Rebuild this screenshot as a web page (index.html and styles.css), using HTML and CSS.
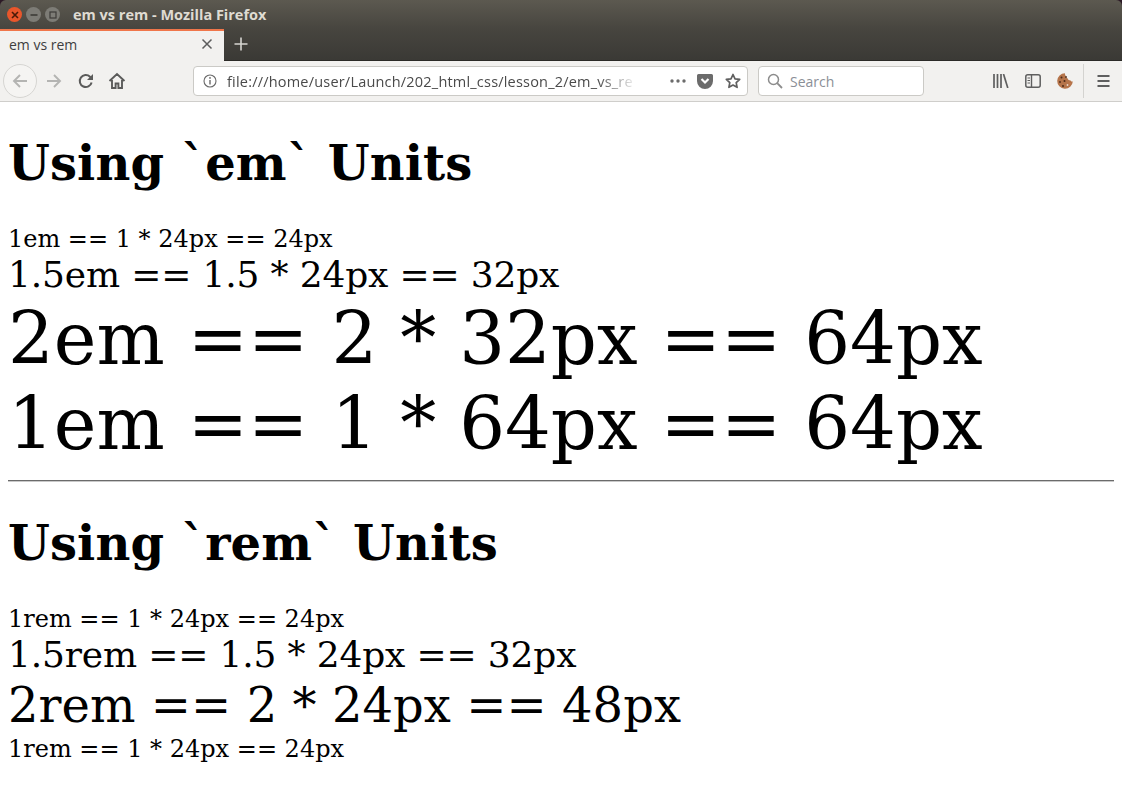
FILE: index.html
```html
<!DOCTYPE html>
<html lang="en">
  <head>
    <meta charset="UTF-8" />
    <meta name="viewport" content="width=device-width, initial-scale=1.0" />
    <title>em vs rem</title>
    <link rel="stylesheet" href="styles.css">
  </head>

  <body>
    <div class="browser">
      <!-- title bar -->
      <div class="titlebar">
        <div class="window-buttons">
          <span class="win-btn win-btn--close">
            <svg width="8" height="8" viewBox="0 0 8 8"><path d="M1 1l6 6M7 1L1 7" stroke="#4a1a08" stroke-width="1.6"/></svg>
          </span>
          <span class="win-btn">
            <svg width="8" height="8" viewBox="0 0 8 8"><path d="M0.500 4h7" stroke="#3c3b37" stroke-width="1.6"/></svg>
          </span>
          <span class="win-btn">
            <svg width="8" height="8" viewBox="0 0 8 8"><rect x="1" y="1" width="6" height="6" fill="none" stroke="#3c3b37" stroke-width="1.2"/></svg>
          </span>
        </div>
        <span class="titlebar__text">em vs rem - Mozilla Firefox</span>
      </div>

      <!-- tabs -->
      <div class="tabstrip">
        <div class="tab">
          <span class="tab__label">em vs rem</span>
          <svg class="tab__close" width="12" height="12" viewBox="0 0 12 12"><path d="M1.500 1.500l9 9M10.500 1.500l-9 9" stroke="#5c5c5c" stroke-width="1.500"/></svg>
        </div>
        <svg class="tab-new" width="14" height="14" viewBox="0 0 14 14"><path d="M7 0.500v13M0.500 7h13" stroke="#d6d5d1" stroke-width="1.600"/></svg>
      </div>

      <!-- toolbar -->
      <div class="toolbar">
        <span class="back-btn">
          <svg width="18" height="18" viewBox="0 0 18 18"><path d="M16 9H3M9 3L3 9l6 6" fill="none" stroke="#b4b4b2" stroke-width="1.900"/></svg>
        </span>
        <svg class="tool-icon tool-icon--forward" width="18" height="18" viewBox="0 0 18 18"><path d="M2 9h13M9 3l6 6-6 6" fill="none" stroke="#b4b4b2" stroke-width="1.900"/></svg>
        <svg class="tool-icon tool-icon--reload" width="18" height="18" viewBox="0 0 18 18"><path d="M14.600 10.500A6 6 0 1 1 13 4.800L15 6.500" fill="none" stroke="#5b5b5a" stroke-width="2"/><path d="M16 2v6h-6z" fill="#5b5b5a"/></svg>
        <svg class="tool-icon tool-icon--home" width="18" height="18" viewBox="0 0 18 18"><path d="M1.500 9L9 2l7.500 7M4 8v8h3.600v-4.500h2.800V16H14V8" fill="none" stroke="#5b5b5a" stroke-width="1.900"/></svg>

        <div class="urlbar">
          <svg class="urlbar__info" width="14" height="14" viewBox="0 0 14 14"><circle cx="7" cy="7" r="6" fill="none" stroke="#6a6a6a" stroke-width="1.100"/><path d="M7 6v4.500" stroke="#6a6a6a" stroke-width="1.400"/><circle cx="7" cy="3.900" r="0.900" fill="#6a6a6a"/></svg>
          <span class="urlbar__text">file:///home/user/Launch/202_html_css/lesson_2/em_vs_re</span>
          <svg class="urlbar__more" width="16" height="4" viewBox="0 0 16 4"><circle cx="2" cy="2" r="1.700" fill="#6b6b6b"/><circle cx="8" cy="2" r="1.700" fill="#6b6b6b"/><circle cx="14" cy="2" r="1.700" fill="#6b6b6b"/></svg>
          <svg class="urlbar__pocket" width="16" height="15" viewBox="0 0 16 15"><path d="M1.500 0h13A1.500 1.500 0 0 1 16 1.500V7A8 8 0 0 1 0 7V1.500A1.500 1.500 0 0 1 1.500 0z" fill="#6b6b6b"/><path d="M4.500 5L8 8.500 11.500 5" fill="none" stroke="#fff" stroke-width="2.200"/></svg>
          <svg class="urlbar__star" width="16" height="16" viewBox="0 0 16 16"><path d="M8 1.500l2 4.300 4.700.6-3.500 3.200.9 4.700L8 12l-4.100 2.300.9-4.700L1.300 6.400 6 5.800z" fill="none" stroke="#5f5f5f" stroke-width="1.700" stroke-linejoin="round"/></svg>
        </div>

        <div class="searchbar">
          <svg width="16" height="16" viewBox="0 0 16 16"><circle cx="6.500" cy="6.500" r="5" fill="none" stroke="#8c8c8c" stroke-width="1.500"/><path d="M10.200 10.200L15 15" stroke="#8c8c8c" stroke-width="1.800"/></svg>
          <span class="searchbar__text">Search</span>
        </div>

        <div class="toolbar__right">
          <svg width="16" height="14" viewBox="0 0 16 14"><path d="M1 0v14M4.500 0v14M8 0v14" stroke="#5f5f5f" stroke-width="1.700"/><path d="M10.500 0l4.300 14" stroke="#5f5f5f" stroke-width="1.700"/></svg>
          <svg width="16" height="14" viewBox="0 0 16 14"><rect x="0.800" y="0.800" width="14.400" height="12.400" rx="2" fill="none" stroke="#5f5f5f" stroke-width="1.500"/><path d="M6.500 1v12" stroke="#5f5f5f" stroke-width="1.400"/><path d="M2.500 4h2.500M2.500 6.500h2.500M2.500 9h2.500" stroke="#5f5f5f" stroke-width="1"/></svg>
          <svg width="16" height="16" viewBox="0 0 16 16">
            <path d="M8 0.200a7.800 7.800 0 1 0 7.800 8.300c-1.200.3-2-.3-2.500-1.200-1.300.2-2.400-.6-2.600-1.800C9.400 5 8.400 4 8.600 2.800 8 2.200 7.900 1.100 8 0.200z" fill="#b5744a"/>
            <circle cx="4.500" cy="4.500" r="1" fill="#4d2a18"/><circle cx="9" cy="4" r="0.900" fill="#4d2a18"/><circle cx="3" cy="9" r="0.900" fill="#4d2a18"/><circle cx="7.500" cy="8" r="1" fill="#4d2a18"/><circle cx="6" cy="13" r="1" fill="#4d2a18"/><circle cx="10.500" cy="12" r="0.900" fill="#e8d8cc"/><circle cx="13" cy="10.500" r="0.800" fill="#c9794f"/>
          </svg>
          <span class="toolbar__sep"></span>
          <svg width="13" height="12" viewBox="0 0 13 12"><path d="M0.500 1h12M0.500 6h12M0.500 11h12" stroke="#5f5f5f" stroke-width="1.800"/></svg>
        </div>
      </div>

      <!-- page content -->
      <main class="page">
        <h1>Using `em` Units</h1>
        <div class="size-1">1em == 1 * 24px == 24px</div>
        <div class="size-1-5">1.5em == 1.5 * 24px == 32px</div>
        <div class="size-3">2em == 2 * 32px == 64px</div>
        <div class="size-3">1em == 1 * 64px == 64px</div>
        <hr />
        <h1>Using `rem` Units</h1>
        <div class="size-1">1rem == 1 * 24px == 24px</div>
        <div class="size-1-5">1.5rem == 1.5 * 24px == 32px</div>
        <div class="size-2">2rem == 2 * 24px == 48px</div>
        <div class="size-1">1rem == 1 * 24px == 24px</div>
      </main>
    </div>
  </body>
</html>
```

FILE: styles.css
```css
/* page and window */
html,
body {
  margin: 0;
  padding: 0;
  height: 100%;
}

body {
  background-color: #fff;
  overflow: hidden;
}

.browser {
  display: flex;
  flex-direction: column;
  height: 100%;
  background-color: #2c1a26;
  font-family: "Open Sans", "Noto Sans", sans-serif;
}

/* title bar */
.titlebar {
  display: flex;
  align-items: center;
  flex: 0 0 29px;
  padding-left: 7px;
  border-radius: 6px 6px 0 0;
  background: linear-gradient(#5c5950, #47453f);
}

.window-buttons {
  display: flex;
  gap: 4px;
}

.win-btn {
  display: flex;
  align-items: center;
  justify-content: center;
  width: 15px;
  height: 15px;
  border-radius: 50%;
  background-color: #7d7c76;
}

.win-btn--close {
  background-color: #e9562b;
}

.titlebar__text {
  margin-left: 13px;
  font-size: 14.500px;
  font-weight: 700;
  color: #dfdbd2;
}

/* tabs */
.tabstrip {
  display: flex;
  align-items: center;
  box-sizing: border-box;
  flex: 0 0 32px;
  background: linear-gradient(#47453f, #3a3935);
  box-shadow: inset 0 -1px 0 #2b2a27;
}

.tab {
  display: flex;
  align-items: center;
  justify-content: space-between;
  box-sizing: border-box;
  width: 224px;
  height: 32px;
  padding: 0 11px 4px 9px;
  border-top: 2px solid #f0764a;
  background-color: #f2f1ef;
}

.tab__label {
  font-size: 14px;
  color: #3e3e3e;
}

.tab-new {
  margin-left: 10px;
  margin-bottom: 2px;
}

/* toolbar */
.toolbar {
  display: flex;
  align-items: center;
  flex: 0 0 40px;
  padding: 0 0 0 3px;
  border-bottom: 1px solid #cfcecb;
  background-color: #f2f1ef;
}

.back-btn {
  display: flex;
  align-items: center;
  justify-content: center;
  box-sizing: border-box;
  width: 34px;
  height: 34px;
  border: 1px solid #d6d5d2;
  border-radius: 50%;
  background-color: #f5f4f2;
}

.tool-icon--forward {
  margin-left: 8px;
}

.tool-icon--reload {
  margin-left: 14px;
}

.tool-icon--home {
  margin-left: 13px;
}

.urlbar {
  display: flex;
  align-items: center;
  box-sizing: border-box;
  width: 555px;
  height: 30px;
  margin-left: 67px;
  padding: 0 6px 0 9px;
  border: 1px solid #cbcac6;
  border-radius: 4px;
  background-color: #fff;
}

.urlbar__text {
  flex: 0 0 407px;
  min-width: 0;
  margin-left: 10px;
  white-space: nowrap;
  font-size: 14.500px;
  letter-spacing: 0.200px;
  color: #4a4a4a;
  -webkit-mask-image: linear-gradient(to right, #000 91%, rgba(0, 0, 0, 0.1) 100%);
  mask-image: linear-gradient(to right, #000 91%, rgba(0, 0, 0, 0.1) 100%);
}

.urlbar__more {
  margin-left: auto;
}

.urlbar__pocket {
  margin-left: 11px;
}

.urlbar__star {
  margin-left: 12px;
}

.searchbar {
  display: flex;
  align-items: center;
  box-sizing: border-box;
  width: 166px;
  height: 30px;
  margin-left: 10px;
  padding-left: 8px;
  border: 1px solid #cbcac6;
  border-radius: 4px;
  background-color: #fff;
}

.searchbar__text {
  margin-left: 7px;
  font-size: 14px;
  color: #8b8f96;
}

.toolbar__right {
  display: flex;
  align-items: center;
  gap: 16px;
  margin-left: 69px;
}

.toolbar__sep {
  width: 1px;
  height: 34px;
  margin-left: -6px;
  margin-right: -3px;
  background-color: #d4d3d0;
}

/* page content */
.page {
  flex: 1;
  padding: 0 8px;
  background-color: #fff;
  color: #000;
  font-family: "DejaVu Serif", serif;
  font-size: 24px;
}

h1 {
  margin: 32px 0;
  font-size: 48px;
  line-height: 58px;
  letter-spacing: 0.120px;
}

hr {
  margin: 14px 0 32px;
  border: 0;
  border-top: 1px solid #6b6b6b;
  border-bottom: 1px solid #c9c9c9;
}

.size-1 {
  padding-top: 1px;
  font-size: 24px;
  line-height: 28px;
}

.size-1-5 {
  font-size: 36px;
  line-height: 43px;
  letter-spacing: -0.160px;
}

.size-2 {
  font-size: 48px;
  line-height: 58px;
  letter-spacing: 0.040px;
}

.size-3 {
  padding-top: 1px;
  font-size: 72px;
  line-height: 84px;
  letter-spacing: 0.040px;
}
```
